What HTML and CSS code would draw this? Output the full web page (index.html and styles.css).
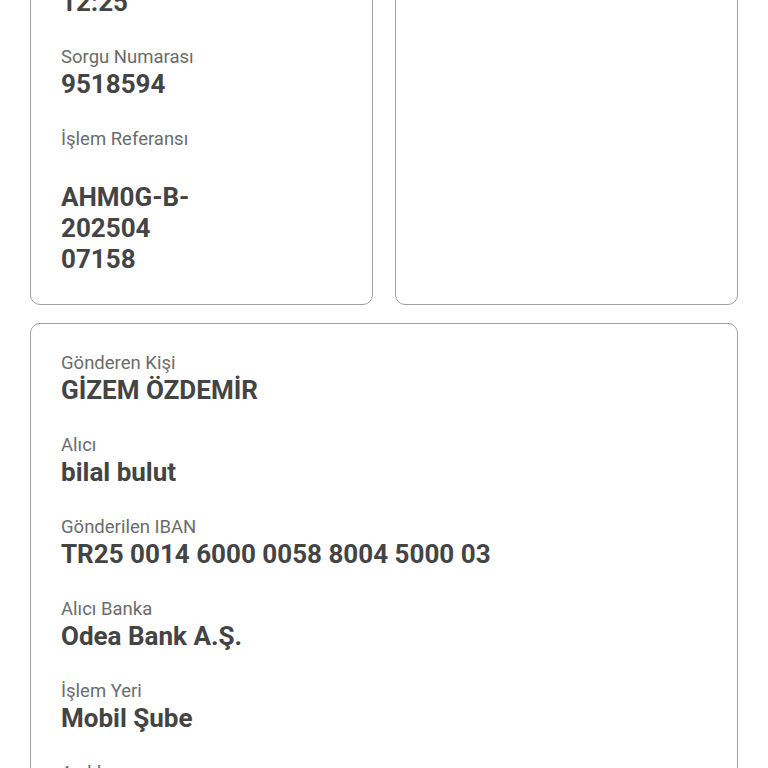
FILE: index.html
```html
<!DOCTYPE html>
<html lang="tr">
<head>
    <meta charset="UTF-8">
    <meta name="viewport" content="width=device-width, initial-scale=1.0">
    <title>İşlem Dekontu</title>
    <link rel="stylesheet" href="styles.css">
</head>
<body>
    <div class="receipt">
        <div class="top-row">
            <div class="card">
                <div class="item">
                    <div class="label">İşlem Tarihi</div>
                    <div class="value">07.04.2025</div>
                </div>
                <div class="item">
                    <div class="label">İşlem Saati</div>
                    <div class="value">12:25</div>
                </div>
                <div class="item">
                    <div class="label">Sorgu Numarası</div>
                    <div class="value">9518594</div>
                </div>
                <div class="item">
                    <div class="label">İşlem Referansı</div>
                    <div class="value"><br>AHM0G-B-<br>202504<br>07158</div>
                </div>
            </div>
            <div class="card"></div>
        </div>

        <div class="card">
            <div class="item">
                <div class="label">Gönderen Kişi</div>
                <div class="value">GİZEM ÖZDEMİR</div>
            </div>
            <div class="item">
                <div class="label">Alıcı</div>
                <div class="value">bilal bulut</div>
            </div>
            <div class="item">
                <div class="label">Gönderilen IBAN</div>
                <div class="value">TR25 0014 6000 0058 8004 5000 03</div>
            </div>
            <div class="item">
                <div class="label">Alıcı Banka</div>
                <div class="value">Odea Bank A.Ş.</div>
            </div>
            <div class="item">
                <div class="label">İşlem Yeri</div>
                <div class="value">Mobil Şube</div>
            </div>
            <div class="item">
                <div class="label">Açıklama</div>
                <div class="value">Para transferi</div>
            </div>
        </div>
    </div>
</body>
</html>
```

FILE: styles.css
```css
body {
    font-family: Roboto, "Noto Sans", sans-serif;
    background-color: #ffffff;
    margin: 0;
    padding: 0;
}

/* page is shown scrolled part way down */
.receipt {
    margin-top: -147px;
    padding: 0 30px 40px;
    display: flex;
    flex-direction: column;
    gap: 18px;
}

.top-row {
    display: grid;
    grid-template-columns: 1fr 1fr;
    gap: 22px;
}

.card {
    border: 1px solid #a0a0a0;
    border-radius: 10px;
    padding: 27px 30px 29px;
    background-color: white;
}

.item {
    margin-bottom: 27px;
}

.item:last-child {
    margin-bottom: 0;
}

.label {
    font-size: 18.5px;
    line-height: 24px;
    color: #6c6c6c;
}

.value {
    font-size: 26px;
    line-height: 31px;
    font-weight: bold;
    color: #444444;
}
```
